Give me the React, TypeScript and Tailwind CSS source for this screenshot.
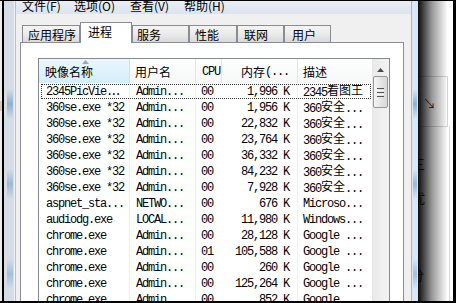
import React from "react";

const mono = "font-['Liberation_Mono','Noto_Sans_CJK_SC',monospace]";
const cjk = "font-['Noto_Sans_CJK_SC','Liberation_Sans',sans-serif]";

type Row = { name: string; shortDots?: boolean; user: string; cpu: string; mem: string; desc: string };

const rows: Row[] = [
  { name: "2345PicVie", shortDots: true, user: "Admin...", cpu: "00", mem: "1,996 K", desc: "2345看图王" },
  { name: "360se.exe *32", user: "Admin...", cpu: "00", mem: "1,956 K", desc: "360安全..." },
  { name: "360se.exe *32", user: "Admin...", cpu: "00", mem: "22,832 K", desc: "360安全..." },
  { name: "360se.exe *32", user: "Admin...", cpu: "00", mem: "23,764 K", desc: "360安全..." },
  { name: "360se.exe *32", user: "Admin...", cpu: "00", mem: "36,332 K", desc: "360安全..." },
  { name: "360se.exe *32", user: "Admin...", cpu: "00", mem: "84,232 K", desc: "360安全..." },
  { name: "360se.exe *32", user: "Admin...", cpu: "00", mem: "7,928 K", desc: "360安全..." },
  { name: "aspnet_sta...", user: "NETWO...", cpu: "00", mem: "676 K", desc: "Microso..." },
  { name: "audiodg.exe", user: "LOCAL...", cpu: "00", mem: "11,980 K", desc: "Windows..." },
  { name: "chrome.exe", user: "Admin...", cpu: "00", mem: "28,128 K", desc: "Google ..." },
  { name: "chrome.exe", user: "Admin...", cpu: "01", mem: "105,588 K", desc: "Google ..." },
  { name: "chrome.exe", user: "Admin...", cpu: "00", mem: "260 K", desc: "Google ..." },
  { name: "chrome.exe", user: "Admin...", cpu: "00", mem: "125,264 K", desc: "Google ..." },
  { name: "chrome.exe", user: "Admin...", cpu: "00", mem: "852 K", desc: "Google ..." },
];

const tabs = [
  { label: "应用程序", cls: "w-[58px] pl-[5px]", sel: false },
  { label: "进程", cls: "w-[52px] pl-[7px]", sel: true },
  { label: "服务", cls: "w-[57px] pl-[4px]", sel: false },
  { label: "性能", cls: "w-[48px] pl-[5px]", sel: false },
  { label: "联网", cls: "w-[47px] pl-[6px]", sel: false },
  { label: "用户", cls: "w-[47px] pl-[7px]", sel: false },
];

function renderDesc(d: string) {
  const m = d.match(/^([0-9]*)([\u4e00-\u9fff]+)(.*)$/);
  if (m) {
    return (
      <>
        {m[1]}
        <span className={`${cjk} tracking-normal leading-[14px] relative -top-[1px]`}>{m[2]}</span>
        {m[3]}
      </>
    );
  }
  return d;
}

function Frame({ side }: { side: "l" | "r" }) {
  return (
    <div className={`h-full flex ${side === "l" ? "w-[10px] bg-[#d6dde6]" : "w-[6px] bg-[#d9e7f6]"}`}>
      <div className={`h-full flex flex-col ${side === "l" ? "ml-[3px] w-[6px]" : "ml-[1px] w-[4px]"}`}>
        <div className="h-[88px]" />
        <div className="h-[30px] bg-gradient-to-b from-transparent via-[#8fb0d0] to-transparent" />
        <div className="h-[50px]" />
        <div className="h-[30px] bg-gradient-to-b from-transparent via-[#9bb8d6] to-transparent" />
        <div className="h-[60px]" />
        <div className="h-[30px] bg-gradient-to-b from-transparent via-[#a4bfdb] to-transparent" />
      </div>
    </div>
  );
}

export default function App() {
  return (
    <div className="w-[456px] h-[303px] overflow-hidden bg-black flex flex-col select-none">
      <div className="h-[1px] bg-black" />
      <div className="h-[300px] flex">
        {/* far left background strip */}
        <div className="w-[2px] h-full bg-[#ececec] flex flex-col">
          <div className="h-[100px]" />
          <div className="h-[10px] bg-[#d8c9b8]" />
        </div>
        <div className="w-[2px] h-full bg-black" />
        <Frame side="l" />
        <div className="w-[2px] h-full bg-[#eef2f7] border-r border-[#b9c3ce]" />

        {/* window client */}
        <div className="w-[395px] h-full flex flex-col bg-[#f0f0f0]">
          {/* menu bar */}
          <div className={`h-[13px] overflow-hidden bg-gradient-to-b from-[#e9eef6] to-[#dde4ef] ${cjk} text-[12px] text-black`}>
            <div className="flex -mt-[3px] leading-[16px] pl-[6px]">
              <span className="w-[52px]">文件(F)</span>
              <span className="w-[56px]">选项(O)</span>
              <span className="w-[54px]">查看(V)</span>
              <span>帮助(H)</span>
            </div>
          </div>

          {/* body */}
          <div className="flex-1 flex flex-col pt-[8px] overflow-hidden">
            {/* tabs */}
            <div className={`h-[21px] -mb-[1px] flex items-end pl-[6px] relative z-10 ${cjk} text-[12px] text-black`}>
              {tabs.map((t) =>
                t.sel ? (
                  <div key={t.label} className={`${t.cls} h-[21px] bg-white border border-b-0 border-[#898c95] flex items-center pb-[2px]`}>
                    {t.label}
                  </div>
                ) : (
                  <div key={t.label} className={`${t.cls} h-[17px] mb-[1px] bg-gradient-to-b from-[#f4f4f4] via-[#ebebeb] to-[#d9d9d9] border border-b-0 border-[#898c95] flex items-center pt-[1px]`}>
                    {t.label}
                  </div>
                )
              )}
            </div>

            {/* tab panel */}
            <div className="ml-[4px] w-[384px] flex-1 bg-white border border-b-0 border-[#898c95] pt-[15px] pl-[17px]">
              {/* listview */}
              <div className="w-[352px] h-[300px] border border-[#828790] flex">
                <div className="w-[333px] flex flex-col">
                  {/* header */}
                  <div className={`h-[24px] flex text-[12px] text-black ${cjk}`}>
                    <div className="w-[91px] relative pl-[6px] flex items-center pt-[2px] bg-gradient-to-b from-[#eaf7fd] to-[#d4edf9] border-r border-[#c8e6f3]">
                      映像名称
                      <svg className="absolute left-[43px] top-[1px]" width="7" height="4" viewBox="0 0 7 4">
                        <path d="M0 4 L3.5 0 L7 4 Z" fill="#98a8bb" />
                      </svg>
                    </div>
                    <div className="w-[66px] pl-[5px] flex items-center pt-[2px] bg-gradient-to-b from-white to-[#f6f7f8] border-r border-[#e3e5e8]">用户名</div>
                    <div className={`w-[26px] pl-[6px] flex items-center pt-[2px] bg-gradient-to-b from-white to-[#f6f7f8] border-r border-[#e3e5e8] ${mono} tracking-[-1.2px]`}>CPU</div>
                    <div className="w-[76px] pr-[8px] flex items-center justify-end pt-[2px] bg-gradient-to-b from-white to-[#f6f7f8] border-r border-[#e3e5e8]">
                      内存<span className={`${mono} tracking-[-1.2px]`}>(...</span>
                    </div>
                    <div className="w-[74px] pl-[5px] flex items-center pt-[2px] bg-gradient-to-b from-white to-[#f6f7f8]">描述</div>
                  </div>
                  {/* rows */}
                  <div className={`flex flex-col text-[12px] leading-[16px] text-black ${mono} tracking-[-1.2px]`}>
                    {rows.map((r, i) => (
                      <div key={i} className="h-[16px] flex relative whitespace-nowrap">
                        <div className="w-[91px] pl-[7px] border-r border-[#f0f0f0] pt-[1px]">
                          {r.name}
                          {r.shortDots && <span className="tracking-[-3px]">...</span>}
                        </div>
                        <div className="w-[66px] pl-[6px] border-r border-[#f0f0f0] pt-[1px]">{r.user}</div>
                        <div className="w-[26px] pl-[5px] pt-[1px]">{r.cpu}</div>
                        <div className="w-[76px] pr-[8px] text-right border-r border-[#f0f0f0] pt-[1px]">{r.mem}</div>
                        <div className="w-[74px] pl-[5px] pt-[1px]">{renderDesc(r.desc)}</div>
                        {i === 0 && (
                          <div className="absolute left-[2px] right-[1px] top-[1px] bottom-0 border border-dotted border-[#333]" />
                        )}
                      </div>
                    ))}
                  </div>
                </div>
                {/* scrollbar */}
                <div className="w-[17px] h-full flex flex-col bg-gradient-to-r from-[#e9e9e9] to-[#f4f4f4] border-l border-[#e6e6e6]">
                  <div className="h-[17px] flex justify-center pt-[9px] pr-[1px]">
                    <svg width="7" height="4" viewBox="0 0 7 4">
                      <path d="M0 4 L3.5 0 L7 4 Z" fill="#4a4a4a" />
                    </svg>
                  </div>
                  <div className="w-[15px] h-[32px] rounded-[2px] border border-[#979797] bg-gradient-to-r from-[#f4f4f4] to-[#d8d8d8] flex flex-col items-center justify-center gap-[1px]">
                    <div className="w-[7px] h-[1px] bg-[#555]" />
                    <div className="w-[7px] h-[1px] bg-[#f4f4f4]" />
                    <div className="w-[7px] h-[1px] bg-[#555]" />
                    <div className="w-[7px] h-[1px] bg-[#f4f4f4]" />
                    <div className="w-[7px] h-[1px] bg-[#555]" />
                  </div>
                </div>
              </div>
            </div>
          </div>
        </div>

        <div className="w-[1px] h-full bg-[#a7b4c2]" />
        <Frame side="r" />

        {/* shadow + window behind */}
        <div className="w-[35px] h-full relative bg-white overflow-hidden">
          <div className="h-[75px]" />
          <div className={`w-[30px] h-[51px] border-t border-r border-b border-[#d6d6d6] ${cjk} text-[13px] text-[#333] pl-[5px] pt-[16px]`}>
            <span className="text-[#6b2b1b]">↘</span>
          </div>
          <div className={`w-[32px] border-r border-[#d6d6d6] h-[200px] ${cjk} text-[13px] text-[#333] flex flex-col`}>
            <div className="h-[27px]" />
            <div className="-ml-[6px]">三</div>
            <div className="h-[14px]" />
            <div className="-ml-[6px]">优</div>
            <div className="h-[58px]" />
            <div className="-ml-[7px]">分</div>
          </div>
          <div className="absolute inset-0 bg-gradient-to-r from-black/95 via-black/40 via-40% to-transparent to-85%" />
        </div>
        <div className="w-[3px] h-full bg-black" />
      </div>
      <div className="h-[2px] bg-black" />
    </div>
  );
}
